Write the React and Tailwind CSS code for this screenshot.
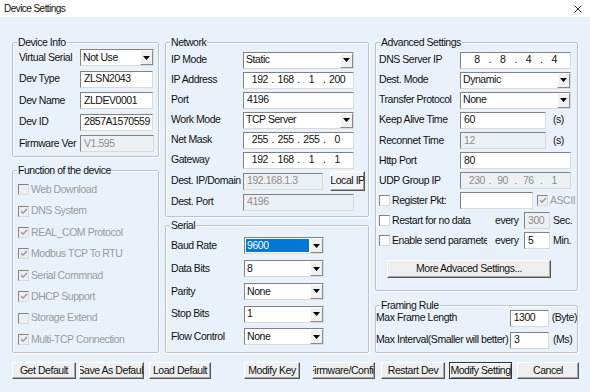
import React from 'react';

const sunken = 'border border-t-[#828282] border-l-[#828282] border-r-[#dadada] border-b-[#dadada]';

function Group({ title, className = '', children }) {
  return (
    <div className={`relative rounded-[2px] border border-[#b9c3cd] shadow-[inset_1px_1px_0_#fff,1px_1px_0_#fff] ${className}`}>
      <span className="absolute -top-[8px] left-[4px] bg-[#e9f1fb] px-[1px] leading-[14px]">{title}</span>
      <div className="h-full overflow-hidden">{children}</div>
    </div>
  );
}

function Field({ value = '', w, disabled, className = '' }) {
  return (
    <div className={`flex h-[17px] shrink-0 items-center overflow-hidden whitespace-nowrap px-[3px] ${sunken} ${disabled ? 'bg-[#eef1f4] text-[#8e8e8e]' : 'bg-white'} ${w} ${className}`}>
      {value}
    </div>
  );
}

function IpField({ parts, w, disabled }) {
  return (
    <div className={`flex h-[17px] shrink-0 items-center px-[6px] ${sunken} ${disabled ? 'bg-[#eef1f4] text-[#8e8e8e]' : 'bg-white'} ${w}`}>
      {parts.map((p, i) => (
        <React.Fragment key={i}>
          {i > 0 && <span className="w-[6px] text-center">.</span>}
          <span className="flex-1 text-center">{p}</span>
        </React.Fragment>
      ))}
    </div>
  );
}

function Select({ value, w, selected }) {
  return (
    <div className={`flex h-[17px] shrink-0 bg-white ${sunken} ${w}`}>
      <div className="flex min-w-0 flex-1 items-center pl-[1px] pr-[1px]">
        <span className={`flex h-[13px] flex-1 items-center whitespace-nowrap px-[1px] ${selected ? 'bg-[#0078d7] text-white' : ''}`}>{value}</span>
      </div>
      <div className="flex w-[13px] items-center justify-center border border-t-white border-l-white border-r-[#8a8a8a] border-b-[#8a8a8a] bg-[#f0f0f0]">
        <svg width="7" height="4" viewBox="0 0 7 4"><path d="M0 0h7L3.5 4z" fill="#000" /></svg>
      </div>
    </div>
  );
}

function Check({ checked, disabled }) {
  return (
    <span className={`flex h-[11px] w-[11px] shrink-0 items-center justify-center ${sunken} ${disabled ? 'bg-[#eceff2]' : 'bg-white'}`}>
      {checked && (
        <svg width="8" height="7" viewBox="0 0 8 7">
          <path d="M1 3.2l2 2L7 1" fill="none" stroke={disabled ? '#9a9a9a' : '#000'} strokeWidth="1.6" />
        </svg>
      )}
    </span>
  );
}

function Btn({ children, className = '', primary }) {
  return (
    <div className={`flex h-[17px] shrink-0 items-center justify-center overflow-hidden whitespace-nowrap border bg-[#efefef] ${primary ? 'border-[#333] shadow-[inset_1px_1px_0_#fff,inset_-1px_-1px_0_#8a8a8a]' : 'border-t-white border-l-white border-r-[#555] border-b-[#555] shadow-[inset_-1px_-1px_0_#a8a8a8]'} ${className}`}>
      {children}
    </div>
  );
}

const functions = [
  ['Web Download', false],
  ['DNS System', true],
  ['REAL_COM Protocol', true],
  ['Modbus TCP To RTU', true],
  ['Serial Commnad', true],
  ['DHCP Support', true],
  ['Storage Extend', false],
  ['Multi-TCP Connection', true],
];

export default function App() {
  return (
    <div className="h-[392px] w-[590px] overflow-hidden bg-[#e9f1fb] font-['Liberation_Sans',Arial,sans-serif] text-[10.5px] tracking-[-0.45px] text-[#111]">
      <div className="flex h-[17px] items-center justify-between bg-white pl-[4px] pr-[8px]">
        <span className="text-[10px] tracking-[-0.55px] text-[#111]">Device Settings</span>
        <svg width="8" height="8" viewBox="0 0 8 8">
          <path d="M0.5 0.5l7 7M7.5 0.5l-7 7" stroke="#333" strokeWidth="1" />
        </svg>
      </div>

      <div className="flex gap-[6px] pl-[12px] pt-[25px]">
        {/* left column */}
        <div className="flex w-[147px] flex-col gap-[13px]">
          <Group title="Device Info" className="h-[115px]">
            <div className="flex flex-col pl-[6px] pt-[4px]">
              <div className="flex h-[21.5px] items-center">
                <span className="w-[61px] whitespace-nowrap">Virtual Serial</span>
                <Select value="Not Use" w="w-[74px]" />
              </div>
              <div className="flex h-[21.5px] items-center">
                <span className="w-[61px]">Dev Type</span>
                <Field value="ZLSN2043" w="w-[73px]" className="bg-[#f3f6f9]" />
              </div>
              <div className="flex h-[21.5px] items-center">
                <span className="w-[61px]">Dev Name</span>
                <Field value="ZLDEV0001" w="w-[73px]" />
              </div>
              <div className="flex h-[21.5px] items-center">
                <span className="w-[61px]">Dev ID</span>
                <Field value="2857A1570559" w="w-[73px]" />
              </div>
              <div className="flex h-[21.5px] items-center">
                <span className="w-[61px] whitespace-nowrap">Firmware Ver</span>
                <Field value="V1.595" w="w-[74px]" disabled />
              </div>
            </div>
          </Group>

          <Group title="Function of the device" className="h-[183px]">
            <div className="flex flex-col pl-[5px] pt-[8px] text-[#9c9c9c]">
              {functions.map(([label, checked]) => (
                <div key={label} className="flex h-[21.43px] items-center gap-[2px] whitespace-nowrap">
                  <Check checked={checked} disabled />
                  <span>{label}</span>
                </div>
              ))}
            </div>
          </Group>
        </div>

        {/* middle column */}
        <div className="flex w-[204px] flex-col gap-[8px]">
          <Group title="Network" className="h-[175px]">
            <div className="flex flex-col pl-[5px] pt-[7px]">
              <div className="flex h-[20px] items-center">
                <span className="w-[72px]">IP Mode</span>
                <Select value="Static" w="w-[111px]" />
              </div>
              <div className="flex h-[20px] items-center">
                <span className="w-[72px]">IP Address</span>
                <IpField parts={['192', '168', '1', '200']} w="w-[111px]" />
              </div>
              <div className="flex h-[20px] items-center">
                <span className="w-[72px]">Port</span>
                <Field value="4196" w="w-[111px]" />
              </div>
              <div className="flex h-[20px] items-center">
                <span className="w-[72px]">Work Mode</span>
                <Select value="TCP Server" w="w-[111px]" />
              </div>
              <div className="flex h-[20px] items-center">
                <span className="w-[72px]">Net Mask</span>
                <IpField parts={['255', '255', '255', '0']} w="w-[111px]" />
              </div>
              <div className="flex h-[20px] items-center">
                <span className="w-[72px]">Gateway</span>
                <IpField parts={['192', '168', '1', '1']} w="w-[111px]" />
              </div>
              <div className="flex h-[22px] items-center">
                <span className="w-[72px] whitespace-nowrap">Dest. IP/Domain</span>
                <Field value="192.168.1.3" w="w-[80px]" disabled />
                <Btn className="ml-[7px] h-[20px] w-[35px] bg-[#f4f4f4]">Local IP</Btn>
              </div>
              <div className="flex h-[20px] items-center">
                <span className="w-[72px]">Dest. Port</span>
                <Field value="4196" w="w-[111px]" disabled />
              </div>
            </div>
          </Group>

          <Group title="Serial" className="h-[128px]">
            <div className="flex flex-col pl-[5px] pt-[8.6px]">
              <div className="flex h-[22.75px] items-center">
                <span className="w-[73px]">Baud Rate</span>
                <Select value="9600" w="w-[80px]" selected />
              </div>
              <div className="flex h-[22.75px] items-center">
                <span className="w-[73px]">Data Bits</span>
                <Select value="8" w="w-[80px]" />
              </div>
              <div className="flex h-[22.75px] items-center">
                <span className="w-[73px]">Parity</span>
                <Select value="None" w="w-[80px]" />
              </div>
              <div className="flex h-[22.75px] items-center">
                <span className="w-[73px]">Stop Bits</span>
                <Select value="1" w="w-[80px]" />
              </div>
              <div className="flex h-[22.75px] items-center">
                <span className="w-[73px]">Flow Control</span>
                <Select value="None" w="w-[80px]" />
              </div>
            </div>
          </Group>
        </div>

        {/* right column */}
        <div className="flex w-[203px] flex-col gap-[14px]">
          <Group title="Advanced Settings" className="h-[249px]">
            <div className="flex flex-col pl-[3px] pt-[7px]">
              <div className="flex h-[20.1px] items-center">
                <span className="w-[81px]">DNS Server IP</span>
                <IpField parts={['8', '8', '4', '4']} w="w-[111px]" />
              </div>
              <div className="flex h-[20.1px] items-center">
                <span className="w-[81px]">Dest. Mode</span>
                <Select value="Dynamic" w="w-[111px]" />
              </div>
              <div className="flex h-[20.1px] items-center">
                <span className="w-[81px] whitespace-nowrap">Transfer Protocol</span>
                <Select value="None" w="w-[111px]" />
              </div>
              <div className="flex h-[20.1px] items-center">
                <span className="w-[81px] whitespace-nowrap">Keep Alive Time</span>
                <Field value="60" w="w-[86px]" />
                <span className="ml-[7px]">(s)</span>
              </div>
              <div className="flex h-[20.1px] items-center">
                <span className="w-[81px] whitespace-nowrap">Reconnet Time</span>
                <Field value="12" w="w-[86px]" disabled />
                <span className="ml-[7px]">(s)</span>
              </div>
              <div className="flex h-[20.1px] items-center">
                <span className="w-[81px]">Http Port</span>
                <Field value="80" w="w-[111px]" />
              </div>
              <div className="flex h-[20.1px] items-center">
                <span className="w-[81px] whitespace-nowrap">UDP Group IP</span>
                <IpField parts={['230', '90', '76', '1']} w="w-[111px]" disabled />
              </div>
              <div className="flex h-[20.1px] items-center whitespace-nowrap">
                <span className="flex w-[81px] items-center gap-[2px]">
                  <Check />
                  <span>Register Pkt:</span>
                </span>
                <Field w="w-[73px]" className="bg-[#f5f7f9]" />
                <span className="ml-[4px] flex items-center gap-[2px] text-[#9c9c9c]">
                  <Check checked disabled />
                  <span>ASCII</span>
                </span>
              </div>
              <div className="flex h-[20.1px] items-center whitespace-nowrap">
                <span className="flex w-[108px] items-center gap-[2px] overflow-hidden">
                  <Check />
                  <span>Restart for no data</span>
                </span>
                <span className="ml-[8px] w-[29px]">every</span>
                <Field value="300" w="w-[26px]" disabled />
                <span className="ml-[3px]">Sec.</span>
              </div>
              <div className="flex h-[20.1px] items-center whitespace-nowrap">
                <span className="flex w-[108px] items-center gap-[2px] overflow-hidden">
                  <Check />
                  <span>Enable send parameter</span>
                </span>
                <span className="ml-[8px] w-[29px]">every</span>
                <Field value="5" w="w-[26px]" />
                <span className="ml-[3px]">Min.</span>
              </div>
              <Btn className="ml-[8px] mt-[9px] h-[18px] w-[164px]">More Advaced Settings...</Btn>
            </div>
          </Group>

          <Group title="Framing Rule" className="h-[48px]">
            <div className="flex flex-col pt-[1px] whitespace-nowrap">
              <div className="flex h-[22px] items-center">
                <span className="w-[134px]">Max Frame Length</span>
                <Field value="1300" w="w-[39px]" />
                <span className="ml-[3px]">(Byte)</span>
              </div>
              <div className="flex h-[22px] items-center">
                <span className="w-[134px]">Max Interval(Smaller will better)</span>
                <Field value="3" w="w-[39px]" />
                <span className="ml-[4px]">(Ms)</span>
              </div>
            </div>
          </Group>
        </div>
      </div>

      <div className="flex pl-[12px] pt-[9px]">
        <Btn className="w-[64px]">Get Default</Btn>
        <Btn className="ml-[3px] w-[65px]">Save As Default</Btn>
        <Btn className="ml-[5px] w-[62px]">Load Default</Btn>
        <Btn className="ml-[33px] w-[56px]">Modify Key</Btn>
        <Btn className="ml-[12px] w-[63px]">Firmware/Config</Btn>
        <Btn className="ml-[6px] w-[64px]">Restart Dev</Btn>
        <Btn className="ml-[4px] w-[63px]" primary>Modify Setting</Btn>
        <Btn className="ml-[5px] w-[62px]">Cancel</Btn>
      </div>
    </div>
  );
}
